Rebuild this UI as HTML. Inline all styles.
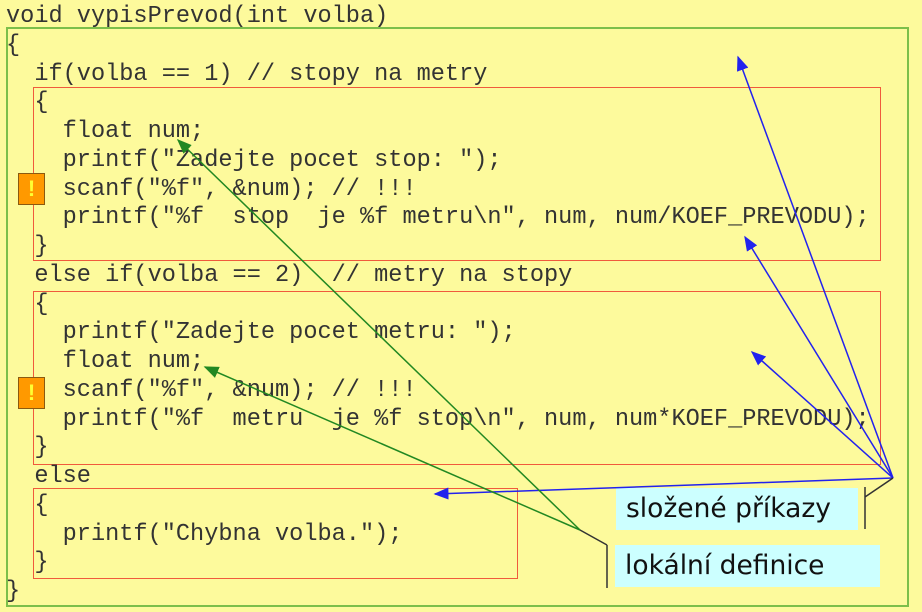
<!DOCTYPE html>
<html><head><meta charset="utf-8"><style>
html,body{margin:0;padding:0;}
body{width:922px;height:612px;background:#fdfa9c;position:relative;overflow:hidden;}
.code{position:absolute;left:6px;top:3px;font-family:"Courier New","Nimbus Mono PS","FreeMono","Liberation Mono",monospace;font-size:23.6px;line-height:28.75px;color:#333;white-space:pre;margin:0;}
.box{position:absolute;border:1.5px solid #f05a3c;}
.outer{position:absolute;left:6px;top:27px;width:903px;height:580px;border:2px solid #7cbf4a;box-sizing:border-box;}
.warn{position:absolute;width:27px;height:32px;background:#ff9900;border:1.5px solid #8a5a10;box-sizing:border-box;color:#ffff33;font:bold 22px "Liberation Sans",sans-serif;text-align:center;line-height:30px;}
.call{position:absolute;background:#ccffff;font-family:"DejaVu Sans",sans-serif;font-size:26.5px;color:#111;line-height:42px;padding-left:10px;box-sizing:border-box;}
</style></head><body>
<div class="outer"></div>
<div class="box" style="left:33px;top:87px;width:846px;height:172px"></div>
<div class="box" style="left:33px;top:291px;width:846px;height:172px"></div>
<div class="box" style="left:33px;top:488px;width:483px;height:89px"></div>
<pre class="code">void vypisPrevod(int volba)
{
  if(volba == 1) // stopy na metry
  {
    float num;
    printf("Zadejte pocet stop: ");
    scanf("%f", &amp;num); // !!!
    printf("%f  stop  je %f metru\n", num, num/KOEF_PREVODU);
  }
  else if(volba == 2)  // metry na stopy
  {
    printf("Zadejte pocet metru: ");
    float num;
    scanf("%f", &amp;num); // !!!
    printf("%f  metru  je %f stop\n", num, num*KOEF_PREVODU);
  }
  else
  {
    printf("Chybna volba.");
  }
}</pre>
<div class="warn" style="left:18px;top:173px">!</div>
<div class="warn" style="left:18px;top:377px">!</div>
<div class="call" style="left:616px;top:488px;width:242px;height:42px">složené příkazy</div>
<div class="call" style="left:615px;top:545px;width:265px;height:42px">lokální definice</div>
<svg width="922" height="612" style="position:absolute;left:0;top:0">
<defs>
<marker id="b" markerWidth="10" markerHeight="8" refX="9" refY="4" orient="auto"><path d="M0,0 L10,4 L0,8z" fill="#2222ee"/></marker>
<marker id="g" markerWidth="10" markerHeight="8" refX="9" refY="4" orient="auto"><path d="M0,0 L10,4 L0,8z" fill="#228822"/></marker>
</defs>
<g stroke="#2222ee" stroke-width="1.5" fill="none">
<line x1="893" y1="478" x2="738" y2="57" marker-end="url(#b)"/>
<line x1="893" y1="478" x2="745" y2="237" marker-end="url(#b)"/>
<line x1="893" y1="478" x2="752" y2="352" marker-end="url(#b)"/>
<line x1="893" y1="478" x2="435" y2="494" marker-end="url(#b)"/>
</g>
<g stroke="#228822" stroke-width="1.5" fill="none">
<line x1="580" y1="530" x2="178" y2="140" marker-end="url(#g)"/>
<line x1="580" y1="530" x2="205" y2="367" marker-end="url(#g)"/>
</g>
<g stroke="#333" stroke-width="1.5" fill="none">
<path d="M865,487 V529 M865,497 L893,478"/>
<path d="M607,545 V588 M607,545 L580,530"/>
</g>
</svg>
</body></html>
